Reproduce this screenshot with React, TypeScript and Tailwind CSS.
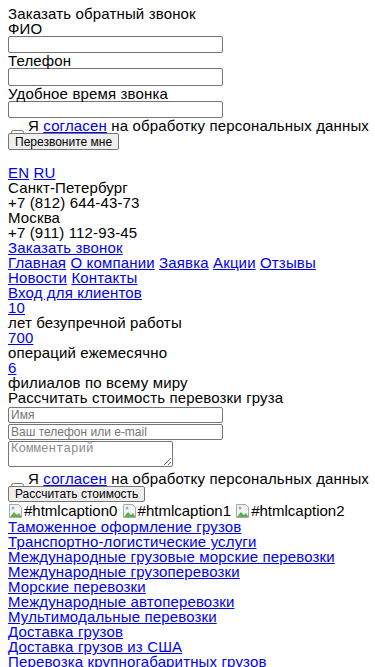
import React from "react";

const A = ({ children }: { children: React.ReactNode }) => (
  <a href="#" className="text-[#0000ee] underline">
    {children}
  </a>
);

const BrokenImg = ({ alt }: { alt: string }) => (
  <span className="inline-block">
    <svg width="16" height="16" viewBox="0 0 16 16" className="inline-block align-[-3px]">
      <path d="M1.5 1.5h9l3 3v10h-12z" fill="#f4f4f4" stroke="#a8a8a8" />
      <path d="M2 14l4-5 3 3 2-2 2.5 4z" fill="#5db04d" />
      <circle cx="5" cy="5" r="1.5" fill="#7fb8e8" />
    </svg>
    {alt}
  </span>
);

const Consent = ({ h }: { h: string }) => (
  <div className={`${h} whitespace-nowrap`}>
    <input
      type="checkbox"
      className="w-[13px] h-[13px] ml-[3px] mr-[4px] align-[-12px] appearance-auto"
    />
    Я <A>согласен</A> на обработку персональных данных
  </div>
);

const inputCls =
  "block w-[215px] border border-[#767676] rounded-[2px] bg-white px-[2px] text-[12px] leading-[14px] tracking-normal placeholder:text-[#757575]";

const btnCls =
  "inline-block align-top h-full px-[6px] border border-[#767676] rounded-[2px] bg-[#efefef] text-[12px] leading-[14px] tracking-normal text-black";

export default function App() {
  const services = [
    "Таможенное оформление грузов",
    "Транспортно-логистические услуги",
    "Международные грузовые морские перевозки",
    "Международные грузоперевозки",
    "Морские перевозки",
    "Международные автоперевозки",
    "Мультимодальные перевозки",
    "Доставка грузов",
    "Доставка грузов из США",
    "Перевозка крупногабаритных грузов",
  ];
  return (
    <div
      className="bg-white text-black px-2 pt-[6px] text-[15px] leading-[15px] tracking-[0.15px]"
      style={{ fontFamily: '"Liberation Sans", Arial, sans-serif' }}
    >
      <div>Заказать обратный звонок</div>
      <div>ФИО</div>
      <input className={`${inputCls} h-[17.3px]`} />
      <div>Телефон</div>
      <input className={`${inputCls} h-[17.3px]`} />
      <div>Удобное время звонка</div>
      <input className={`${inputCls} h-[17.3px]`} />
      <Consent h="h-[15.3px]" />
      <div className="h-[17.3px]">
        <button className={btnCls}>Перезвоните мне</button>
      </div>

      <div className="h-[15px]" />
      <div>
        <A>EN</A> <A>RU</A>
      </div>
      <div>Санкт-Петербург</div>
      <div>+7 (812) 644-43-73</div>
      <div>Москва</div>
      <div>+7 (911) 112-93-45</div>
      <div>
        <A>Заказать звонок</A>
      </div>
      <div>
        <A>Главная</A> <A>О компании</A> <A>Заявка</A> <A>Акции</A>{" "}
        <A>Отзывы</A> <A>Новости</A> <A>Контакты</A>
      </div>
      <div>
        <A>Вход для клиентов</A>
      </div>
      <div>
        <A>10</A>
      </div>
      <div>лет безупречной работы</div>
      <div>
        <A>700</A>
      </div>
      <div>операций ежемесячно</div>
      <div>
        <A>6</A>
      </div>
      <div>филиалов по всему миру</div>
      <div>Рассчитать стоимость перевозки груза</div>
      <input className={`${inputCls} h-[16px] mt-[1.5px]`} placeholder="Имя" />
      <input className={`${inputCls} h-[16px] mt-[1px]`} placeholder="Ваш телефон или e-mail" />
      <textarea
        className="block w-[165px] h-[26px] mt-[1.5px] border border-[#767676] rounded-[2px] px-[2px] text-[12.5px] leading-[14px] tracking-normal resize-y placeholder:text-[#8a8a8a]"
        style={{ fontFamily: '"Liberation Mono", "DejaVu Sans Mono", monospace' }}
        placeholder="Комментарий"
      />
      <div className="h-[4px]" />
      <Consent h="h-[15px]" />
      <div className="h-[16px]">
        <button className={btnCls}>Рассчитать стоимость</button>
      </div>
      <div className="mt-[1px] whitespace-nowrap tracking-normal">
        <BrokenImg alt="#htmlcaption0" /> <BrokenImg alt="#htmlcaption1" />{" "}
        <BrokenImg alt="#htmlcaption2" />
      </div>
      {services.map((s) => (
        <div key={s}>
          <A>{s}</A>
        </div>
      ))}
    </div>
  );
}
